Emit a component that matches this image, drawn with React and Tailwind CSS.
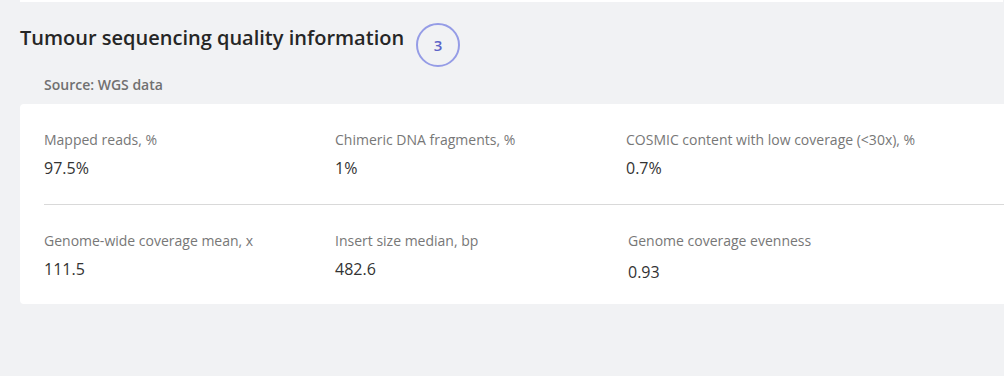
import React from 'react'

const rows = [
  [
    { label: 'Mapped reads, %', value: '97.5%' },
    { label: 'Chimeric DNA fragments, %', value: '1%' },
    { label: 'COSMIC content with low coverage (<30x), %', value: '0.7%' },
  ],
  [
    { label: 'Genome-wide coverage mean, x', value: '111.5' },
    { label: 'Insert size median, bp', value: '482.6' },
    { label: 'Genome coverage evenness', value: '0.93', alt: true },
  ],
]

function Metric({ label, value, alt }) {
  return (
    <div className={alt ? 'pl-[2px]' : ''}>
      <div className="text-[14px] leading-[20px] text-[#777]">{label}</div>
      <div className={`text-[16px] leading-[22px] text-[#333] ${alt ? 'mt-[10px]' : 'mt-[7px]'}`}>
        {value}
      </div>
    </div>
  )
}

export default function App() {
  return (
    <div className="w-[1004px] h-[376px] overflow-hidden bg-[#f1f2f4] font-['Open_Sans',sans-serif]">
      {/* bottom edge of the previous card */}
      <div className="h-[2px] ml-[20px] mr-[1px] bg-white" />

      <div className="px-[20px]">
        <div className="flex items-start mt-[21px]">
          <h2 className="pt-[1px] text-[20px] leading-[28px] font-semibold text-[#262626]">
            Tumour sequencing quality information
          </h2>
          <div className="ml-[12px] w-[44px] h-[44px] rounded-full border-2 border-[#959ce6] flex items-center justify-center text-[15px] font-semibold text-[#5c64c8]">
            3
          </div>
        </div>

        <div className="mt-[9px] pl-[24px] text-[14px] leading-[18px] font-semibold text-[#707070]">
          Source: WGS data
        </div>
      </div>

      <div className="mt-[10px] ml-[20px] w-[990px] bg-white rounded-[4px] pl-[24px] pt-[26px] pb-[21px]">
        <div className="grid grid-cols-[291px_291px_1fr]">
          {rows[0].map((m) => (
            <Metric key={m.label} {...m} />
          ))}
        </div>
        <div className="mt-[25px] h-px bg-[#d9d9d9]" />
        <div className="grid grid-cols-[291px_291px_1fr] mt-[26px]">
          {rows[1].map((m) => (
            <Metric key={m.label} {...m} />
          ))}
        </div>
      </div>
    </div>
  )
}
